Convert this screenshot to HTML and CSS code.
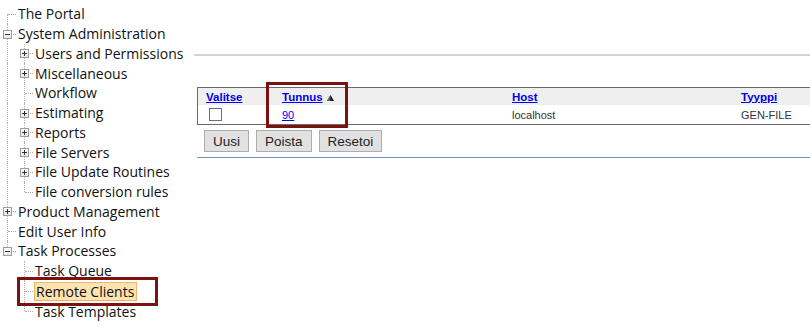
FILE: index.html
```html
<!DOCTYPE html>
<html lang="fi">
<head>
    <meta charset="UTF-8">
    <title>Remote Clients</title>
    <link rel="stylesheet" href="styles.css">
</head>
<body>

<div class="page">
    <nav class="tree">
        <div class="row"><span class="g first"></span><span class="label">The Portal</span></div>
        <div class="row"><span class="g tee"><i class="box"></i></span><span class="label">System Administration</span></div>
        <div class="row"><span class="g v"></span><span class="g tee"><i class="box plus"></i></span><span class="label">Users and Permissions</span></div>
        <div class="row"><span class="g v"></span><span class="g tee"><i class="box plus"></i></span><span class="label">Miscellaneous</span></div>
        <div class="row"><span class="g v"></span><span class="g tee"></span><span class="label">Workflow</span></div>
        <div class="row"><span class="g v"></span><span class="g tee"><i class="box plus"></i></span><span class="label">Estimating</span></div>
        <div class="row"><span class="g v"></span><span class="g tee"><i class="box plus"></i></span><span class="label">Reports</span></div>
        <div class="row"><span class="g v"></span><span class="g tee"><i class="box plus"></i></span><span class="label">File Servers</span></div>
        <div class="row"><span class="g v"></span><span class="g tee"><i class="box plus"></i></span><span class="label">File Update Routines</span></div>
        <div class="row"><span class="g v"></span><span class="g end"></span><span class="label">File conversion rules</span></div>
        <div class="row"><span class="g tee"><i class="box plus"></i></span><span class="label">Product Management</span></div>
        <div class="row"><span class="g tee"></span><span class="label">Edit User Info</span></div>
        <div class="row"><span class="g end"><i class="box"></i></span><span class="label">Task Processes</span></div>
        <div class="row"><span class="g blank"></span><span class="g tee"></span><span class="label">Task Queue</span></div>
        <div class="row row-sel"><span class="g blank"></span><span class="g tee"></span><span class="label selected">Remote Clients</span></div>
        <div class="row"><span class="g blank"></span><span class="g end"></span><span class="label">Task Templates</span></div>

        <div class="mark mark-tree"></div>
    </nav>

    <main class="main">
        <div class="rule"></div>

        <div class="grid-wrap">
            <table class="grid">
                <thead>
                    <tr>
                        <th class="c1"><a href="#">Valitse</a></th>
                        <th class="c2"><a href="#">Tunnus</a><svg class="sort" width="7" height="6" viewBox="0 0 7 6"><polygon points="3.5,0 7,6 0,6" fill="#111"/><polygon points="3.5,0 3.5,6 0,6" fill="#666"/></svg></th>
                        <th class="c3"><a href="#">Host</a></th>
                        <th class="c4"><a href="#">Tyyppi</a></th>
                    </tr>
                </thead>
                <tbody>
                    <tr>
                        <td class="c1"><input type="checkbox" class="check"></td>
                        <td class="c2"><a href="#">90</a></td>
                        <td class="c3">localhost</td>
                        <td class="c4">GEN-FILE</td>
                    </tr>
                </tbody>
            </table>
            <div class="mark mark-grid"></div>
        </div>

        <div class="actions">
            <button>Uusi</button>
            <button>Poista</button>
            <button>Resetoi</button>
        </div>

        <div class="rule-blue"></div>
    </main>
</div>

</body>
</html>
```

FILE: styles.css
```css
body {
    margin: 0;
    background: #fff;
    font-family: "Open Sans", "Noto Sans", sans-serif;
    color: #111;
}

.page {
    display: flex;
    align-items: flex-start;
    width: 810px;
    height: 327px;
    overflow: hidden;
}

/* tree on the left */

.tree {
    position: relative;
    width: 186px;
    flex: none;
    padding-top: 4px;
}

.row {
    display: flex;
    height: 19.75px;
    align-items: center;
    font-size: 14px;
    white-space: nowrap;
}

.row-sel {
    height: 21px;
}

.label {
    margin-left: 1px;
}

.selected {
    margin-left: 0;
    padding: 0 0 0 1px;
    width: 100px;
    line-height: 17px;
    background: #fee3b2;
    border: 1px solid #f3b561;
}

.g {
    position: relative;
    width: 17px;
    flex: none;
    align-self: stretch;
}

.g::before {
    content: '';
    position: absolute;
    left: 7px;
    top: 0;
    bottom: 0;
    border-left: 1px dotted #b4b4b4;
}

.g.end::before {
    bottom: 50%;
}

.g.first::before {
    top: 50%;
}

.g.blank::before {
    display: none;
}

.g.tee::after,
.g.end::after,
.g.first::after {
    content: '';
    position: absolute;
    left: 8px;
    width: 8px;
    top: 50%;
    border-top: 1px dotted #a8a8a8;
}

.box {
    position: absolute;
    left: 3px;
    top: calc(50% - 4px);
    width: 9px;
    height: 9px;
    box-sizing: border-box;
    border: 1px solid #9c9c9c;
    background: linear-gradient(#fff, #e8e8e8);
    z-index: 1;
}

.box::before {
    content: '';
    position: absolute;
    left: 1px;
    top: 3px;
    width: 5px;
    height: 1px;
    background: #333;
}

.box.plus::after {
    content: '';
    position: absolute;
    left: 3px;
    top: 1px;
    width: 1px;
    height: 5px;
    background: #333;
}

/* red annotation frames */

.mark {
    position: absolute;
    border: 3px solid #7a1212;
    box-sizing: border-box;
}

.mark-tree {
    left: 17px;
    top: 277px;
    width: 141px;
    height: 29px;
}

.mark-grid {
    left: 69px;
    top: -5px;
    width: 82px;
    height: 46px;
}

/* main panel */

.main {
    flex: 1;
    padding-left: 8px;
    min-width: 0;
}

.rule {
    margin-top: 54px;
    height: 2px;
    background: #d2d2d2;
}

.grid-wrap {
    position: relative;
    margin: 31px 0 0 3px;
    width: 640px;
}

.grid {
    width: 640px;
    border-collapse: collapse;
    border: 1px solid #6a6a6a;
    font-family: "Liberation Sans", Arial, sans-serif;
    font-size: 11px;
    color: #333;
}

.grid th {
    height: 17px;
    padding: 0 0 0 8px;
    text-align: left;
    background: #efefef;
    font-weight: bold;
    font-size: 11.5px;
}

.grid td {
    height: 19px;
    padding: 0 0 0 8px;
}

.grid a {
    color: #0000ee;
}

.c1 { width: 68px; }
.c2 { width: 222px; }
.c3 { width: 221px; }

.sort {
    margin-left: 4px;
}

.check {
    appearance: none;
    display: block;
    width: 13px;
    height: 13px;
    margin: 0 0 0 3px;
    border: 1px solid #707070;
    background: #fff;
}

.actions {
    display: flex;
    gap: 7px;
    margin: 5px 0 0 10px;
}

.actions button {
    height: 22px;
    padding: 0 8px;
    font-family: "Liberation Sans", Arial, sans-serif;
    font-size: 13.5px;
    color: #222;
    background: #e1e1e1;
    border: 1px solid #adadad;
    border-radius: 0;
}

.rule-blue {
    margin: 5px 0 0 3px;
    height: 1px;
    background: #7397bf;
}
```
